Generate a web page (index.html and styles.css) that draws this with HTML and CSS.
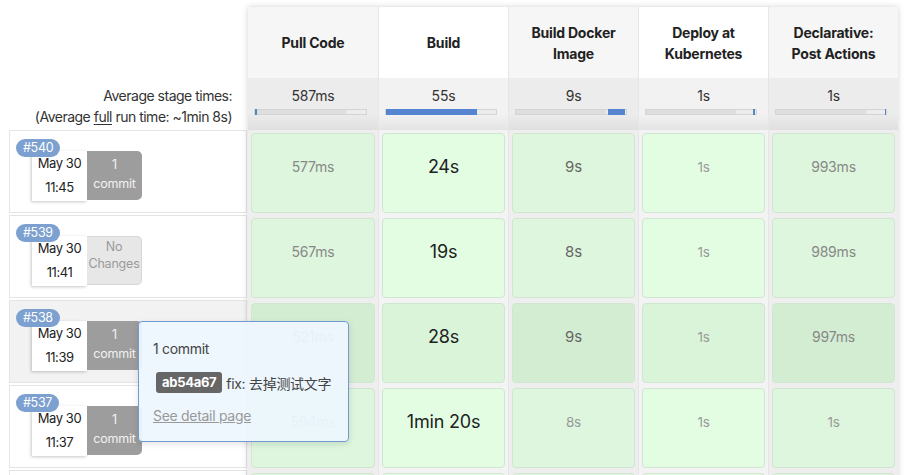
FILE: index.html
```html
<!DOCTYPE html>
<html>
<head>
<meta charset="utf-8">
<link rel="stylesheet" href="styles.css">
</head>
<body>
<div class="page">
  <div class="left">
    <div class="left-head"></div>
    <div class="left-avg">
      <div>Average stage times:</div>
      <div>(Average <u>full</u> run time: ~1min 8s)</div>
    </div>
    <div class="build-row">
      <span class="badge">#540</span>
      <div class="build-info">
        <div class="date"><div>May 30</div><div>11:45</div></div>
        <div class="changes"><div>1</div><div>commit</div></div>
      </div>
    </div>
    <div class="build-row">
      <span class="badge">#539</span>
      <div class="build-info">
        <div class="date"><div>May 30</div><div>11:41</div></div>
        <div class="changes none"><div>No</div><div>Changes</div></div>
      </div>
    </div>
    <div class="build-row hover">
      <span class="badge">#538</span>
      <div class="build-info">
        <div class="date"><div>May 30</div><div>11:39</div></div>
        <div class="changes"><div>1</div><div>commit</div></div>
      </div>
    </div>
    <div class="build-row">
      <span class="badge">#537</span>
      <div class="build-info">
        <div class="date"><div>May 30</div><div>11:37</div></div>
        <div class="changes"><div>1</div><div>commit</div></div>
      </div>
    </div>
    <div class="build-row"></div>
  </div>

  <div class="stages">
    <div class="col odd">
      <div class="head">Pull Code</div>
      <div class="avg">587ms<div class="bar"><span class="fill" style="left:0%;width:1.5%"></span></div></div>
      <div class="cell"><div class="box t-light">577ms</div></div>
      <div class="cell"><div class="box t-light">567ms</div></div>
      <div class="cell hover"><div class="box t-light">521ms</div></div>
      <div class="cell"><div class="box t-light">594ms</div></div>
      <div class="cell"><div class="box"></div></div>
    </div>
    <div class="col even">
      <div class="head">Build</div>
      <div class="avg">55s<div class="bar"><span class="fill" style="left:0%;width:83%"></span></div></div>
      <div class="cell"><div class="box t-big">24s</div></div>
      <div class="cell"><div class="box t-big">19s</div></div>
      <div class="cell hover"><div class="box t-big">28s</div></div>
      <div class="cell"><div class="box t-big">1min 20s</div></div>
      <div class="cell"><div class="box"></div></div>
    </div>
    <div class="col odd">
      <div class="head">Build Docker<br>Image</div>
      <div class="avg">9s<div class="bar"><span class="fill" style="left:84%;width:15%"></span></div></div>
      <div class="cell"><div class="box t-mid">9s</div></div>
      <div class="cell"><div class="box t-mid">8s</div></div>
      <div class="cell hover"><div class="box t-mid">9s</div></div>
      <div class="cell"><div class="box t-faint">8s</div></div>
      <div class="cell"><div class="box"></div></div>
    </div>
    <div class="col even">
      <div class="head">Deploy at<br>Kubernetes</div>
      <div class="avg">1s<div class="bar"><span class="fill" style="left:97.5%;width:2%"></span></div></div>
      <div class="cell"><div class="box t-faint">1s</div></div>
      <div class="cell"><div class="box t-faint">1s</div></div>
      <div class="cell hover"><div class="box t-faint">1s</div></div>
      <div class="cell"><div class="box t-faint">1s</div></div>
      <div class="cell"><div class="box"></div></div>
    </div>
    <div class="col odd">
      <div class="head">Declarative:<br>Post Actions</div>
      <div class="avg">1s<div class="bar"><span class="fill" style="left:98.8%;width:1.2%"></span></div></div>
      <div class="cell"><div class="box t-light">993ms</div></div>
      <div class="cell"><div class="box t-light">989ms</div></div>
      <div class="cell hover"><div class="box t-light">997ms</div></div>
      <div class="cell"><div class="box t-faint">1s</div></div>
      <div class="cell"><div class="box"></div></div>
    </div>
  </div>

  <div class="tooltip">
    <div class="tt-title">1 commit</div>
    <div class="tt-commit"><span class="sha">ab54a67</span><span class="msg">fix: 去掉测试文字</span></div>
    <a class="tt-link">See detail page</a>
  </div>
</div>
</body>
</html>
```

FILE: styles.css
```css
* { box-sizing: border-box; }
html, body { margin: 0; padding: 0; background: #fff; overflow: hidden; }
body {
  font-family: Inter, "Noto Sans", "Noto Sans CJK SC", sans-serif;
  font-size: 14px;
  color: #333;
  letter-spacing: -0.2px;
}
.page {
  position: relative;
  display: flex;
  align-items: flex-start;
  padding: 7px 0 0 9px;
}

/* left column */
.left { width: 238px; margin-right: 1px; flex: none; }
.left-head { height: 71px; }
.left-avg {
  height: 52px;
  padding: 7px 15px 0 0;
  text-align: right;
  line-height: 21px;
  color: #333;
  letter-spacing: -0.5px;
}
.left-avg u { text-decoration-thickness: 1px; text-underline-offset: 2px; }
.build-row {
  height: 83px;
  margin-bottom: 2px;
  border: 1px solid #e4e4e4;
  background: #fff;
  padding: 7px 0 0 6px;
}
.build-row.hover { background: #f2f2f2; }
.badge {
  display: inline-block;
  position: relative;
  z-index: 1;
  height: 18px;
  line-height: 18px;
  padding: 0 7px;
  border-radius: 9px;
  background: #7ca0cf;
  color: #fff;
  font-size: 12.5px;
  letter-spacing: -0.3px;
}
.build-info {
  display: flex;
  margin: -6px 0 0 16px;
}
.date {
  width: 55px;
  height: 50px;
  background: #fff;
  box-shadow: -1px 1px 3px rgba(0,0,0,0.22);
  text-align: center;
  font-size: 13px;
  line-height: 24px;
  color: #222;
  letter-spacing: -0.45px;
}
.changes {
  width: 55px;
  height: 49px;
  background: #9d9d9d;
  border-radius: 0 5px 5px 0;
  color: #f2f2f2;
  text-align: center;
  font-size: 12.5px;
  line-height: 19px;
  padding-top: 4px;
}
.changes.none {
  background: #e7e7e7;
  border: 1px solid #d6d6d6;
  border-left: none;
  color: #9a9a9a;
  line-height: 17px;
  padding-top: 1px;
}

/* stage table */
.stages {
  display: flex;
  box-shadow: 0 0 6px rgba(0,0,0,0.18);
}
.col { width: 130px; flex: none; }
.col + .col { border-left: 1px solid #e6e6e6; }
.head {
  height: 71px;
  display: flex;
  align-items: center;
  justify-content: center;
  text-align: center;
  font-weight: 700;
  line-height: 21px;
  color: #222;
}
.odd .head { background: #f6f6f6; }
.even .head { background: #fff; }
.avg {
  height: 52px;
  padding: 8px 0 0 0;
  line-height: 20px;
  text-align: center;
  color: #333;
}
.odd .avg { background: linear-gradient(#ececec 70%, #dfdfdf); }
.even .avg { background: linear-gradient(#f2f2f2 70%, #e4e4e4); }
.bar {
  position: relative;
  margin: 3px 11px 0 6px;
  height: 6px;
  border: 1px solid #d4d4d4;
  background: linear-gradient(to right, #dedede 82%, #ececec 82%);
}
.fill {
  position: absolute;
  top: -1px;
  bottom: -1px;
  background: #5585d0;
}
.cell {
  height: 85px;
  padding: 3px 3px 2px 3px;
}
.odd .cell { background: #eeeeee; }
.even .cell { background: #f3f3f3; }
.box {
  height: 100%;
  border: 1px solid #d0e6d0;
  border-radius: 4px;
  display: flex;
  align-items: center;
  justify-content: center;
  padding-bottom: 13px;
}
.odd .box { background: #ddf6dd; }
.even .box { background: #e3fde3; }
.odd .hover .box { background: #d3edd3; }
.even .hover .box { background: #d9f4d9; }
.t-big { font-size: 18px; color: #222; }
.t-mid { font-size: 15px; color: #666; }
.t-light { font-size: 14px; color: #888; }
.t-faint { font-size: 13.5px; color: #999; }

/* tooltip */
.tooltip {
  position: absolute;
  left: 138px;
  top: 321px;
  width: 211px;
  height: 121px;
  padding: 17px 10px 0 14px;
  background: rgba(237, 246, 254, 0.94);
  border: 1px solid #6f9bd2;
  border-radius: 4px;
  box-shadow: 0 2px 6px rgba(0,0,0,0.12);
  color: #444;
  letter-spacing: -0.3px;
}
.tt-title { line-height: 20px; }
.tt-commit {
  display: flex;
  align-items: center;
  margin-top: 13px;
  padding-left: 3px;
}
.sha {
  display: inline-block;
  height: 21px;
  line-height: 21px;
  padding: 0 6px;
  background: #666;
  color: #fff;
  font-weight: 700;
  font-size: 13px;
  border-radius: 3px;
  margin-right: 4px;
}
.msg { color: #444; }
.tt-link {
  display: block;
  margin-top: 13px;
  color: #999;
  text-decoration: underline;
  line-height: 20px;
}
```
